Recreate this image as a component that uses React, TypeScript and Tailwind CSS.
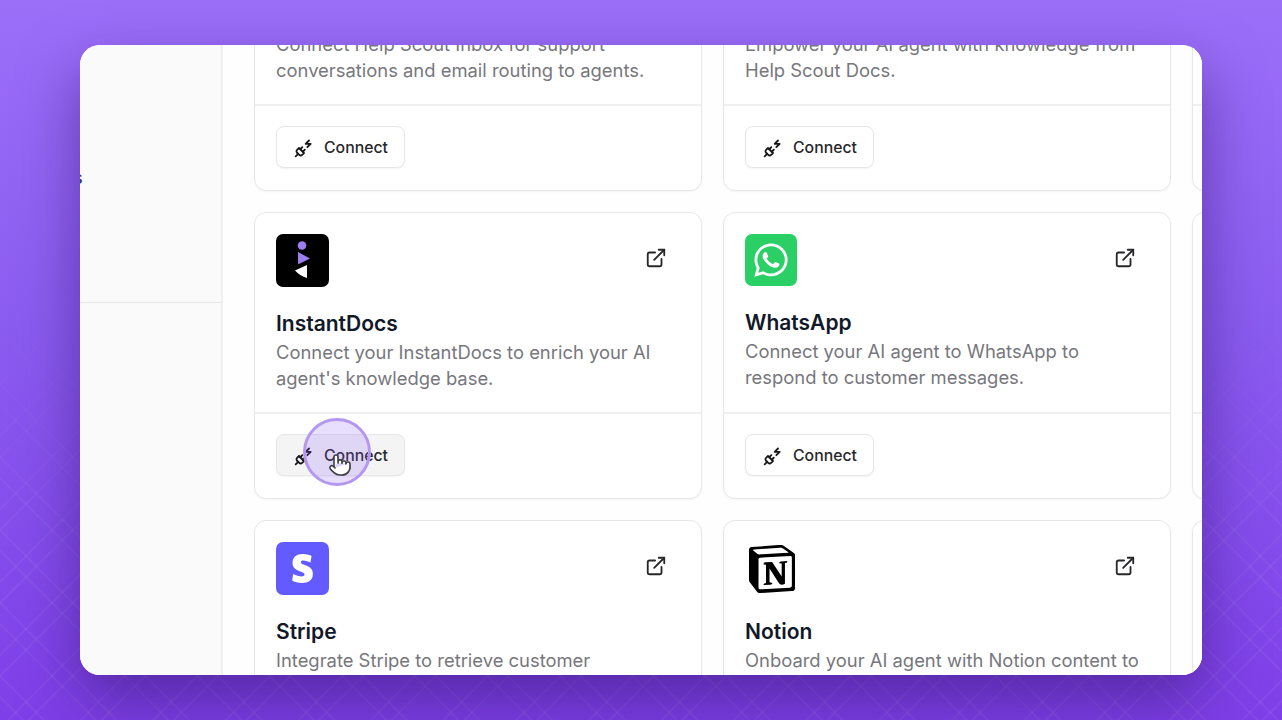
import { ExternalLink, PlugZap, Pointer } from 'lucide-react';
import { FaWhatsapp } from 'react-icons/fa';
import { SiNotion, SiStripe } from 'react-icons/si';
import React from 'react';

function InstantDocsLogo() {
  return (
    <div className="flex h-[53px] w-[53px] items-center justify-center rounded-[7px] bg-black">
      <svg width="53" height="53" viewBox="0 0 53 53">
        <circle cx="26" cy="11.5" r="4.3" fill="#9b7fef" />
        <path d="M22 18 Q22 17.5 23 18.5 L34 24.5 L24 29.5 Q22 30.5 22 29 Z" fill="#9b7fef" />
        <path d="M31 31 L19 36.5 Q24 42 31 44 Z" fill="#ffffff" />
      </svg>
    </div>
  );
}

function WhatsAppLogo() {
  return (
    <div className="flex h-[52px] w-[52px] items-center justify-center rounded-[7px] bg-[#2ad065]">
      <FaWhatsapp className="h-[38px] w-[38px] text-white" />
    </div>
  );
}

function StripeLogo() {
  return (
    <div className="flex h-[53px] w-[53px] items-center justify-center rounded-[7px] bg-[#635bff]">
      <SiStripe className="h-[29px] w-[29px] text-white" />
    </div>
  );
}

function NotionLogo() {
  return (
    <div className="flex h-[53px] w-[53px] items-center justify-center">
      <SiNotion className="h-[48px] w-[48px] text-black" />
    </div>
  );
}

function Pattern() {
  return (
    <svg className="absolute inset-0 h-full w-full" width="1282" height="720">
      <defs>
        <pattern id="diamonds" width="72.6" height="73" patternUnits="userSpaceOnUse" x="-10.3" y="55.5">
          <g fill="none" stroke="#ffffff" strokeOpacity="0.08" strokeWidth="1.2">
            <path d="M36.3 10.5 L62.3 36.5 L36.3 62.5 L10.3 36.5 Z" />
            <path d="M-26 0 L0 -26 L26 0 L0 26 Z" />
            <path d="M46.6 0 L72.6 -26 L98.6 0 L72.6 26 Z" />
            <path d="M-26 73 L0 47 L26 73 L0 99 Z" />
            <path d="M46.6 73 L72.6 47 L98.6 73 L72.6 99 Z" />
            <path d="M0 26 L10.3 36.5 M26 0 L36.3 10.5" />
            <path d="M72.6 26 L62.3 36.5 M46.6 0 L36.3 10.5" />
            <path d="M0 47 L10.3 36.5 M26 73 L36.3 62.5" />
            <path d="M72.6 47 L62.3 36.5 M46.6 73 L36.3 62.5" />
          </g>
        </pattern>
        <linearGradient id="fade" x1="0" y1="0" x2="0" y2="1">
          <stop offset="0.42" stopColor="#ffffff" stopOpacity="0" />
          <stop offset="0.78" stopColor="#ffffff" stopOpacity="1" />
        </linearGradient>
        <mask id="fadeMask">
          <rect width="1282" height="720" fill="url(#fade)" />
        </mask>
      </defs>
      <rect width="1282" height="720" fill="url(#diamonds)" mask="url(#fadeMask)" />
    </svg>
  );
}

interface CardProps {
  logo?: React.ReactNode;
  title?: string;
  description?: string;
  hovered?: boolean;
}

function IntegrationCard({ logo, title, description, hovered }: CardProps) {
  return (
    <div className="flex flex-col rounded-[12px] border border-[#e7e7e9] bg-white shadow-[0_1px_2px_rgba(0,0,0,0.04)]">
      <div className="px-[21px] pt-[21px]">
        <div className="flex items-start justify-between">
          {logo}
          {logo && <ExternalLink className="mt-[13px] mr-[13px] h-[22px] w-[22px] text-[#27272a]" strokeWidth={2} />}
        </div>
        <h3 className="mt-[22px] text-[21px] leading-[30px] font-semibold text-[#111827]">{title}</h3>
        <p className="pb-[20px] text-[18.4px] leading-[26px] text-[#77777d]">{description}</p>
      </div>
      <div className="mt-auto border-t-2 border-[#f0f0f1] px-[21px] pt-[20px] pb-[22px]">
        <button
          className={`flex h-[42px] items-center gap-[10px] rounded-[8px] border border-[#e7e7e9] pt-[1px] pr-[16px] pl-[17px] text-[15.8px] font-medium text-[#27272a] shadow-[0_1px_2px_rgba(0,0,0,0.05)] ${
            hovered ? 'bg-[#f4f4f5]' : 'bg-white'
          }`}
        >
          <PlugZap className="h-[20px] w-[20px] text-[#18181b]" strokeWidth={2.2} />
          Connect
        </button>
      </div>
    </div>
  );
}

export default function App() {
  return (
    <div className="relative flex h-[720px] w-[1282px] items-start overflow-hidden bg-[linear-gradient(180deg,#9c6ff9_0%,#8b5cf0_45%,#7f3fe8_100%)] pt-[45px] pl-[80px] font-['Inter',sans-serif]">
      <Pattern />
      <div className="relative flex h-[630px] w-[1122px] overflow-hidden rounded-[20px] bg-white shadow-[0_26px_60px_rgba(50,20,110,0.55)]">
        <aside className="flex w-[143px] shrink-0 flex-col border-r-2 border-[#efeff0] bg-[#fafafa]">
          <div className="h-[258px] border-b border-[#e7e7e9] pt-[121px]">
            <span className="ml-[-7px] block text-[18px] leading-[24px] font-medium text-[#334155]">s</span>
          </div>
        </aside>
        <main className="min-w-0 flex-1 overflow-hidden bg-[#fefefe] pl-[31px]">
          <div className="mt-[-141px] grid w-[1400px] auto-rows-[287px] grid-cols-[448px_448px_448px] gap-[21px]">
            <IntegrationCard
              logo={<div className="h-[53px] w-[53px]" />}
              title="Help Scout Inbox"
              description="Connect Help Scout Inbox for support conversations and email routing to agents."
            />
            <IntegrationCard
              logo={<div className="h-[53px] w-[53px]" />}
              title="Help Scout Docs"
              description="Empower your AI agent with knowledge from Help Scout Docs."
            />
            <IntegrationCard />
            <IntegrationCard
              logo={<InstantDocsLogo />}
              title="InstantDocs"
              description="Connect your InstantDocs to enrich your AI agent's knowledge base."
              hovered
            />
            <IntegrationCard
              logo={<WhatsAppLogo />}
              title="WhatsApp"
              description="Connect your AI agent to WhatsApp to respond to customer messages."
            />
            <IntegrationCard />
            <IntegrationCard
              logo={<StripeLogo />}
              title="Stripe"
              description="Integrate Stripe to retrieve customer information and billing details."
            />
            <IntegrationCard
              logo={<NotionLogo />}
              title="Notion"
              description="Onboard your AI agent with Notion content to answer user questions."
            />
            <IntegrationCard />
          </div>
        </main>
      </div>

      {/* click highlight over the hovered button */}
      <div className="absolute top-[418px] left-[303px] flex h-[68px] w-[68px] items-center justify-center rounded-full border-[3px] border-[#b497ee] bg-[#8b5cf6]/20">
        <Pointer className="mt-[26px] ml-[5px] h-[24px] w-[24px] fill-white text-[#3f3f46]" strokeWidth={1.6} />
      </div>
    </div>
  );
}
